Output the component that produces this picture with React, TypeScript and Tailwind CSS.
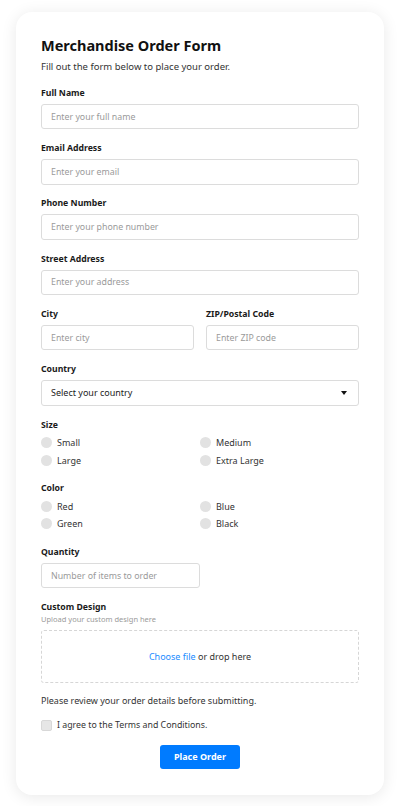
import React from "react"

const font = { fontFamily: '"Noto Sans", "Open Sans", sans-serif' }

function Label({ children }: { children: React.ReactNode }) {
  return <label className="block pt-[1px] text-[8.7px] leading-[13px] font-bold text-[#1a1a1a]">{children}</label>
}

function TextInput({ placeholder }: { placeholder: string }) {
  return (
    <input
      type="text"
      placeholder={placeholder}
      className="mt-[4px] block h-[25.5px] w-full rounded-[3px] border border-[#dcdcdc] bg-white px-[9px] text-[8.8px] text-[#333] placeholder:text-[#9a9a9a] outline-none"
    />
  )
}

function Field({ label, placeholder }: { label: string; placeholder: string }) {
  return (
    <div className="mt-[11.8px]">
      <Label>{label}</Label>
      <TextInput placeholder={placeholder} />
    </div>
  )
}

function RadioGroup({ label, options, className }: { label: string; options: string[]; className: string }) {
  return (
    <div className={className}>
      <Label>{label}</Label>
      <div className="mt-[4px] grid grid-cols-2 gap-y-[3.5px]">
        {options.map((o) => (
          <label key={o} className="flex h-[14px] items-center gap-[5px] text-[9px] text-[#333]">
            <span className="h-[11px] w-[11px] rounded-full bg-[#e2e2e2]" />
            {o}
          </label>
        ))}
      </div>
    </div>
  )
}

export default function App() {
  return (
    <div className="min-h-[806px] bg-white pt-[12px] pb-[11px]" style={font}>
      <div className="mx-[16px] rounded-[16px] bg-white px-[25px] pt-[23px] pb-[26px] shadow-[0_2px_16px_rgba(0,0,0,0.09)]">
        <h1 className="text-[14.5px] leading-[20px] font-bold text-[#111]">Merchandise Order Form</h1>
        <p className="mt-[5px] text-[9.5px] leading-[14px] text-[#333]">Fill out the form below to place your order.</p>

        <Field label="Full Name" placeholder="Enter your full name" />
        <Field label="Email Address" placeholder="Enter your email" />
        <Field label="Phone Number" placeholder="Enter your phone number" />
        <Field label="Street Address" placeholder="Enter your address" />

        <div className="grid grid-cols-2 gap-x-[12px]">
          <Field label="City" placeholder="Enter city" />
          <Field label="ZIP/Postal Code" placeholder="Enter ZIP code" />
        </div>

        <div className="mt-[11.8px]">
          <Label>Country</Label>
          <div className="mt-[4px] flex h-[25.5px] items-center justify-between rounded-[3px] border border-[#dcdcdc] bg-white px-[9px] text-[9px] text-[#222]">
            <span>Select your country</span>
            <svg width="6" height="4" viewBox="0 0 6 4" className="mr-[2px]">
              <path d="M0 0h6L3 4z" fill="#111" />
            </svg>
          </div>
        </div>

        <RadioGroup className="mt-[12px]" label="Size" options={["Small", "Medium", "Large", "Extra Large"]} />
        <RadioGroup className="mt-[14px]" label="Color" options={["Red", "Blue", "Green", "Black"]} />

        <div className="mt-[14px] w-1/2">
          <Label>Quantity</Label>
          <TextInput placeholder="Number of items to order" />
        </div>

        <div className="mt-[12px]">
          <Label>Custom Design</Label>
          <p className="text-[7.5px] leading-[11px] text-[#9a9a9a]">Upload your custom design here</p>
          <div className="mt-[5px] flex h-[53px] items-center justify-center rounded-[3px] border border-dashed border-[#d6d6d6] text-[9px] text-[#333]">
            <span>
              <span className="text-[#1a8cff]">Choose file</span> or drop here
            </span>
          </div>
        </div>

        <p className="mt-[11px] text-[9px] leading-[14px] text-[#333]">Please review your order details before submitting.</p>

        <label className="mt-[10.5px] flex h-[14px] items-center gap-[5px] text-[8.8px] text-[#333]">
          <span className="h-[11px] w-[11px] rounded-[2px] border border-[#d8d8d8] bg-[#e6e6e6]" />
          I agree to the Terms and Conditions.
        </label>

        <div className="mt-[12px] flex justify-center">
          <button className="h-[24px] w-[80px] rounded-[3px] bg-[#007bff] text-[9px] font-bold text-white">Place Order</button>
        </div>
      </div>
    </div>
  )
}
